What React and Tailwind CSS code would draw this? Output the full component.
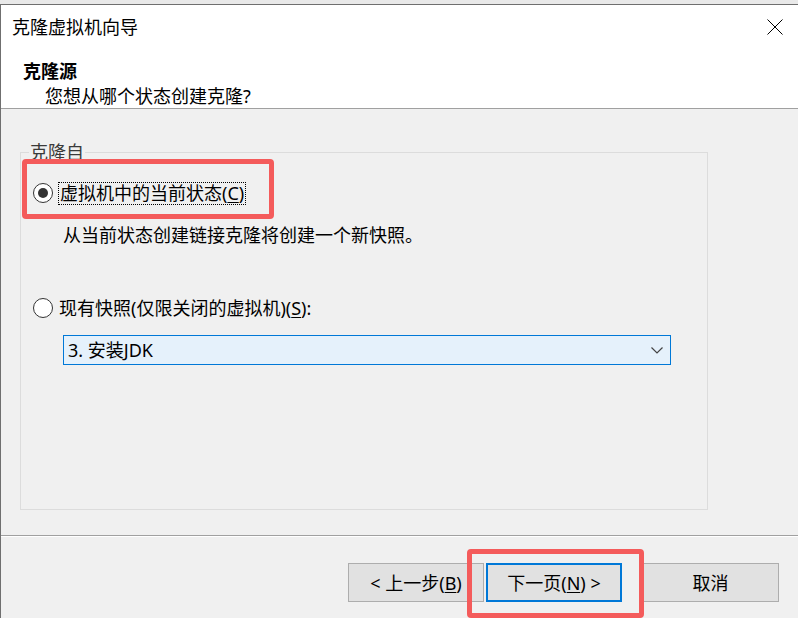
import React from "react";

const font = { fontFamily: '"Noto Sans", "Noto Sans CJK SC", sans-serif' };

function Radio({ checked }) {
  return (
    <span className="flex h-[20px] w-[20px] shrink-0 items-center justify-center rounded-full border border-[#333] bg-white">
      {checked && <span className="h-[10px] w-[10px] rounded-full bg-[#333]" />}
    </span>
  );
}

function Button({ children, focused, w }) {
  return (
    <button
      className={`flex h-[39px] items-center justify-center bg-[#e1e1e1] text-[18px] leading-[24px] text-black ${w} ${
        focused ? "border-2 border-[#0078d7]" : "border border-[#adadad]"
      }`}
    >
      {children}
    </button>
  );
}

export default function App() {
  return (
    <div
      className="relative h-[618px] w-[798px] overflow-hidden bg-[#f0f0f0] text-black"
      style={font}
    >
      <div className="h-[4px] bg-[#e9e9e9]" />
      <div className="h-[614px] border-l border-t border-[#6f6f6f]">
        {/* header */}
        <header className="h-[104px] border-b border-[#a0a0a0] bg-white">
          <div className="flex items-center justify-between pl-[11px] pr-[15px] pt-[8px]">
            <span className="text-[18px] leading-[28px]">克隆虚拟机向导</span>
            <svg width="16" height="16" viewBox="0 0 16 16">
              <path d="M0.5 0.5 L15.5 15.5 M15.5 0.5 L0.5 15.5" stroke="#000" strokeWidth="1" />
            </svg>
          </div>
          <div className="mt-[18px] pl-[22px] text-[18px] font-bold leading-[24px]">克隆源</div>
          <div className="mt-[1px] pl-[44px] text-[18px] leading-[24px]">您想从哪个状态创建克隆?</div>
        </header>

        {/* body */}
        <main className="h-[426px] pl-[19px] pt-[43px]">
          <div className="flex h-[358px] w-[688px] flex-col border border-[#dcdcdc] text-[18px]">
            <span className="-mt-[12px] ml-[8px] w-fit bg-[#f0f0f0] px-[1px] leading-[22px] text-[#3a3a3a]">
              克隆自
            </span>
            <div className="ml-[12px] mt-[18px] flex h-[24px] items-center">
              <Radio checked />
              <span className="ml-[5px] border border-dotted border-black px-[1px] leading-[21px]">
                虚拟机中的当前状态(<span className="underline underline-offset-2">C</span>)
              </span>
            </div>
            <div className="ml-[42px] mt-[18px] leading-[24px]">从当前状态创建链接克隆将创建一个新快照。</div>
            <div className="ml-[12px] mt-[49px] flex h-[24px] items-center">
              <Radio />
              <span className="ml-[6px] leading-[24px]">
                现有快照(仅限关闭的虚拟机)(<span className="underline underline-offset-2">S</span>):
              </span>
            </div>
            <div className="ml-[42px] mt-[15px] flex h-[30px] w-[608px] items-center justify-between border border-[#0078d7] bg-[#e5f1fb] pl-[4px] pr-[7px]">
              <span className="leading-[24px]">3. 安装JDK</span>
              <svg width="12" height="7" viewBox="0 0 12 7">
                <polyline points="0.5,0.5 6,6 11.5,0.5" fill="none" stroke="#444" strokeWidth="1.2" />
              </svg>
            </div>
          </div>
        </main>

        {/* footer */}
        <div className="h-px bg-[#a0a0a0]" />
        <div className="h-px bg-white" />
        <footer className="flex justify-end pr-[19px] pt-[26px]">
          <Button w="w-[136px]">
            &lt; 上一步(<span className="underline underline-offset-2">B</span>)
          </Button>
          <div className="w-[2px]" />
          <Button w="w-[136px]" focused>
            下一页(<span className="underline underline-offset-2">N</span>) &gt;
          </Button>
          <div className="w-[20px]" />
          <Button w="w-[137px]">取消</Button>
        </footer>
      </div>

      {/* red annotation boxes */}
      <div className="absolute left-[22px] top-[159px] h-[60px] w-[252px] rounded-[4px] border-[5px] border-[#f45b5b]" />
      <div className="absolute left-[467px] top-[549px] h-[69px] w-[177px] rounded-[4px] border-[5px] border-[#f45b5b]" />
    </div>
  );
}
